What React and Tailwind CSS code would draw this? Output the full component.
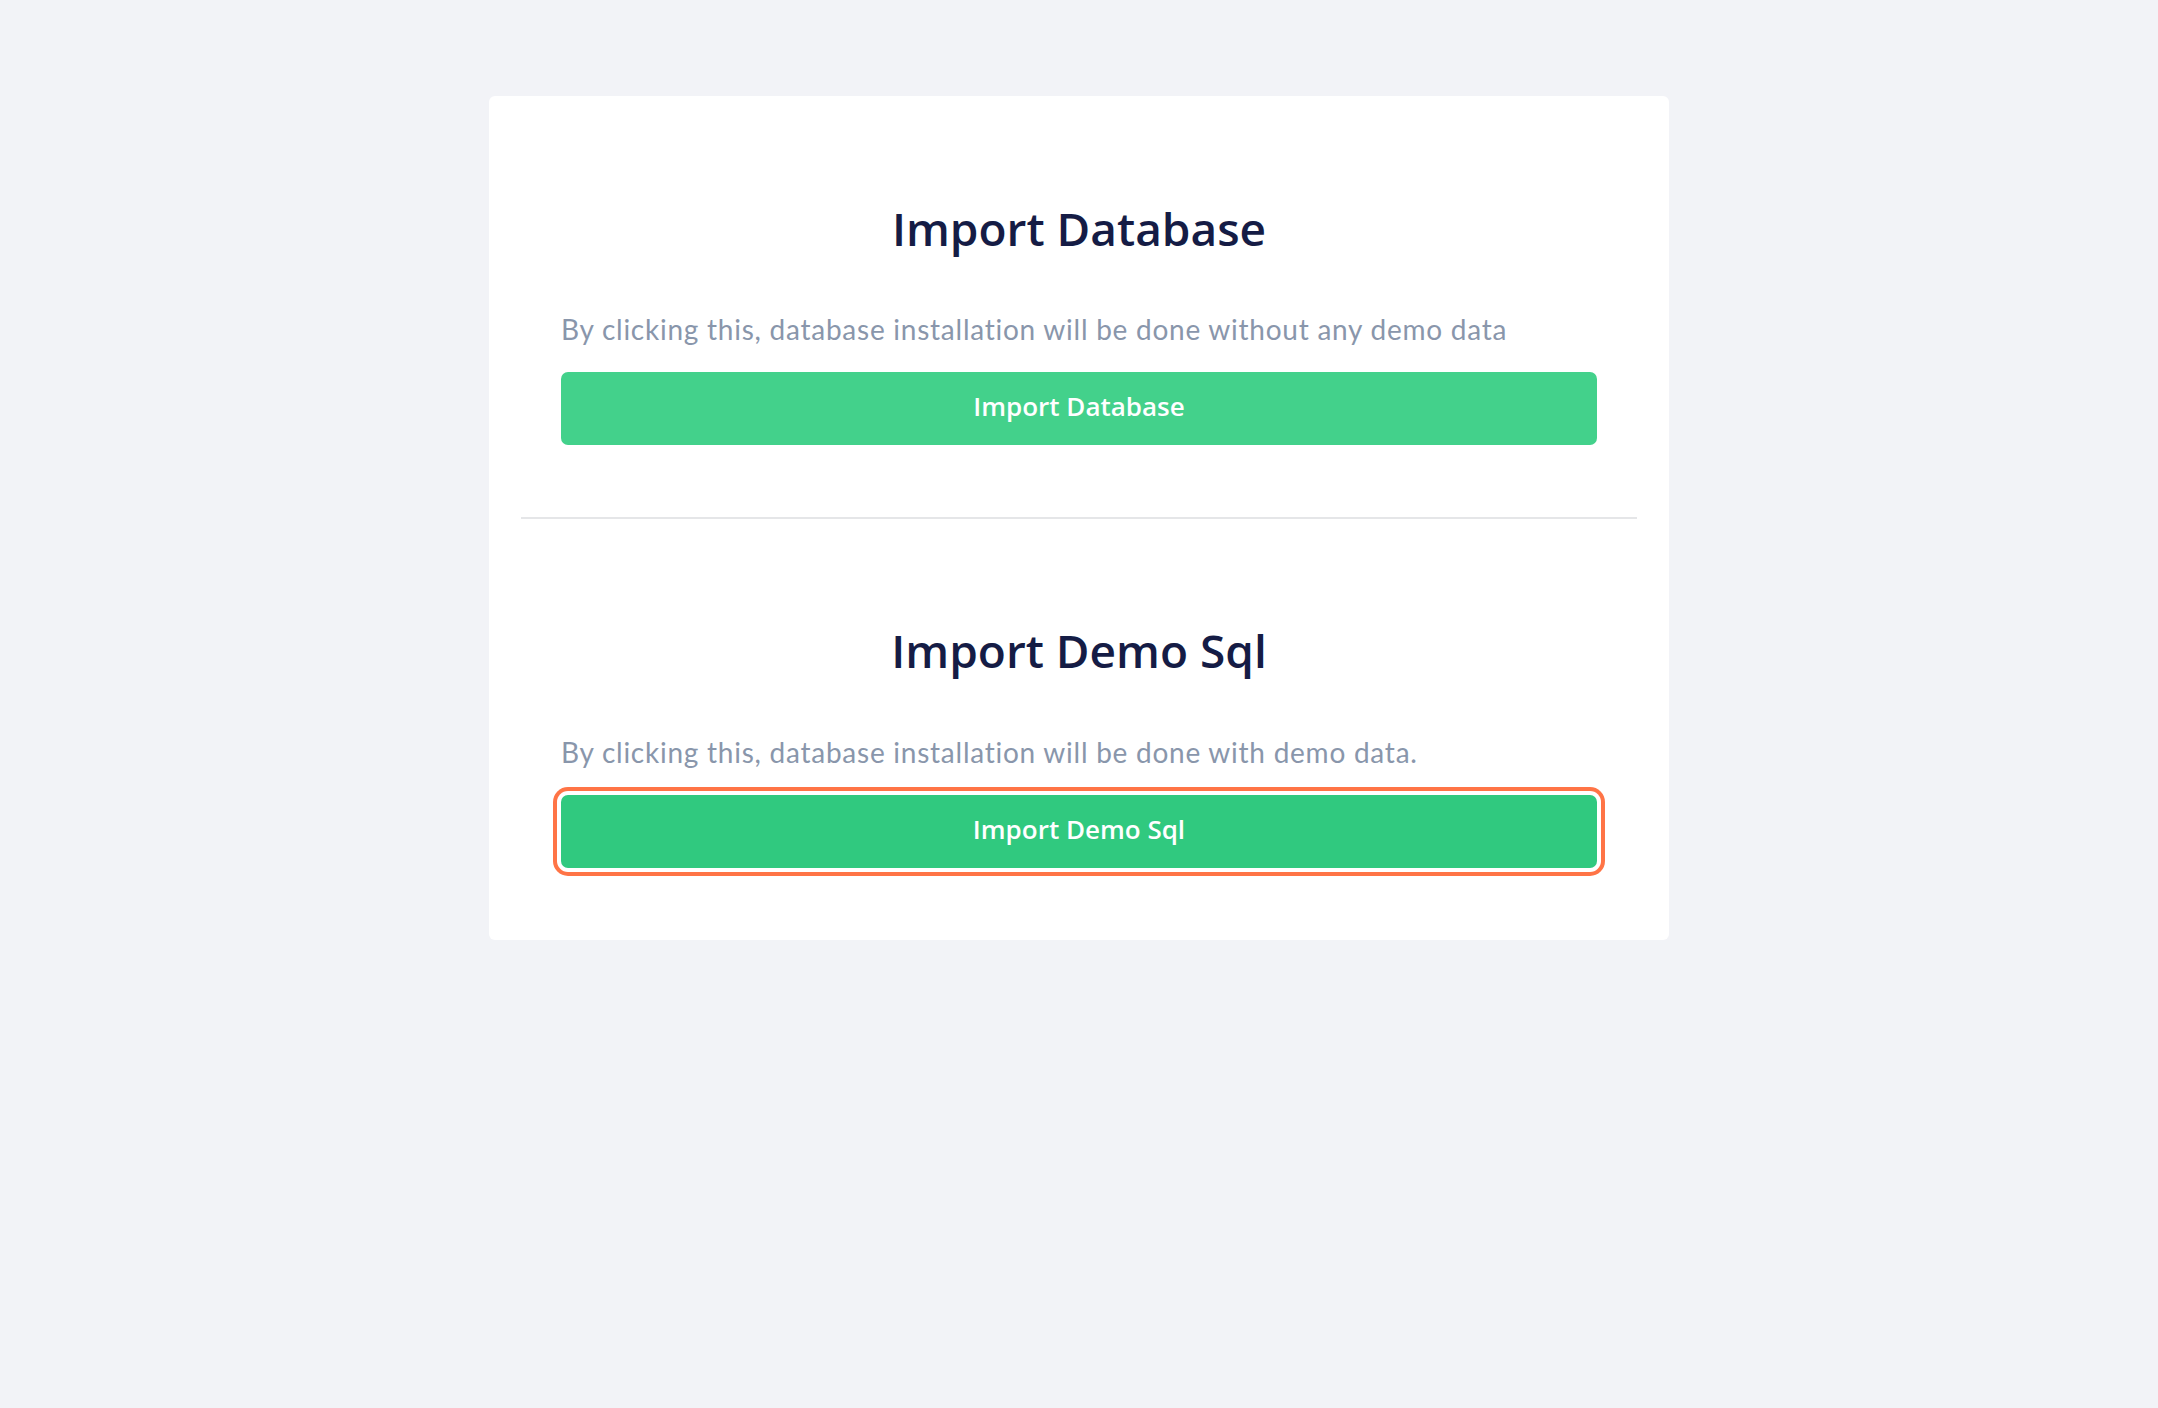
export default function App() {
  return (
    <div className="min-h-[1408px] w-full bg-[#f2f3f7] pt-[96px]">
      <div className="mx-auto w-[1180px] rounded-[6px] bg-white px-[72px]">
        <section className="pt-[109px] pb-[72px]">
          <h2 className="text-center font-['Open_Sans',sans-serif] text-[46px] font-semibold leading-[46px] text-[#151c45]">
            Import Database
          </h2>
          <p className="mt-[64px] font-['Lato',sans-serif] text-[28px] leading-[28px] tracking-[0.75px] text-[#8996ab]">
            By clicking this, database installation will be done without any demo data
          </p>
          <button className="mt-[29px] flex h-[73px] w-full items-center justify-center rounded-[7px] bg-[#43d18b] pb-[5px] font-['Open_Sans',sans-serif] text-[26px] font-semibold leading-[26px] text-white">
            Import Database
          </button>
        </section>
        <div className="mx-[-40px] h-[2px] bg-[#e5e6e8]" />
        <section className="pt-[108px] pb-[72px]">
          <h2 className="text-center font-['Open_Sans',sans-serif] text-[46px] font-semibold leading-[46px] text-[#151c45]">
            Import Demo Sql
          </h2>
          <p className="mt-[65px] font-['Lato',sans-serif] text-[28px] leading-[28px] tracking-[0.75px] text-[#8996ab]">
            By clicking this, database installation will be done with demo data.
          </p>
          <button className="mt-[29px] flex h-[73px] w-full items-center justify-center rounded-[7px] bg-[#30c97f] pb-[5px] font-['Open_Sans',sans-serif] text-[26px] font-semibold leading-[26px] text-white ring-4 ring-[#ff7446] ring-offset-4 ring-offset-white">
            Import Demo Sql
          </button>
        </section>
      </div>
    </div>
  );
}
